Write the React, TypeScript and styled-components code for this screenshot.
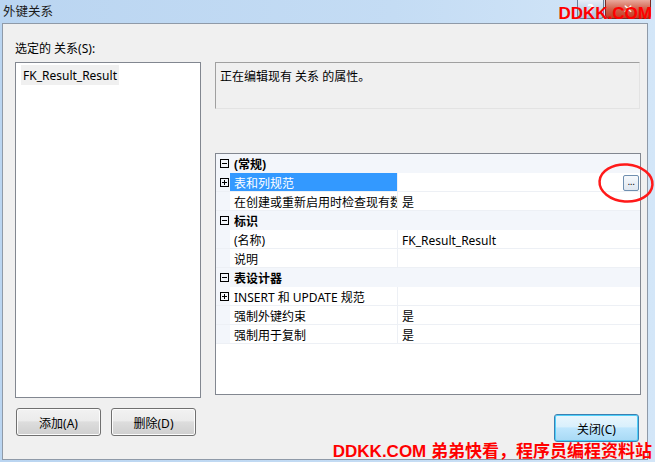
import React from "react";
import styled, { createGlobalStyle } from "styled-components";

const Global = createGlobalStyle`
  html, body { margin: 0; padding: 0; }
  body { width: 655px; height: 462px; overflow: hidden; }
  * { box-sizing: border-box; }
`;

const UI_FONT = `"Noto Sans", "Noto Sans CJK SC", sans-serif`;

const Window = styled.div`
  position: relative;
  width: 655px;
  height: 462px;
  display: flex;
  flex-direction: column;
  background: linear-gradient(to right, #bad5f1 0%, #c4dcf4 60%, #d3e6f8 100%);
  padding: 0 7px 2px 2px;
  font-family: ${UI_FONT};
  font-size: 12px;
  color: #000;
`;

const TitleBar = styled.div`
  height: 23px;
  display: flex;
  align-items: flex-start;
`;

const Title = styled.div`
  padding: 4px 0 0 1px;
  font-size: 12.5px;
  line-height: 16px;
  color: #1b1b1b;
  flex: 1;
`;

const CaptionButton = styled.div<{ $close?: boolean }>`
  width: ${(p) => (p.$close ? 46 : 27)}px;
  height: 19px;
  margin-right: ${(p) => (p.$close ? -3 : 1)}px;
  border: 1px solid ${(p) => (p.$close ? "#7d2a22" : "#6a7f98")};
  border-top: none;
  border-radius: 0 0 4px 4px;
  background: ${(p) =>
    p.$close
      ? "linear-gradient(#e9a99c, #d2604c 50%, #c43b22 100%)"
      : "linear-gradient(#e6eef8, #c6d6ea 50%, #aec3de 100%)"};
  color: #fff;
  font-family: "DejaVu Sans", sans-serif;
  font-weight: bold;
  font-size: 12px;
  display: flex;
  align-items: center;
  justify-content: center;
  line-height: 1;
`;

const Client = styled.div`
  flex: 1;
  background: #f0f0f0;
  border: 1px solid #8f9aa8;
  padding: 15px 6px 0 12px;
  display: flex;
  gap: 14px;
`;

const LeftCol = styled.div`
  width: 186px;
  display: flex;
  flex-direction: column;
`;

const Label = styled.div`
  height: 23px;
  line-height: 16px;
  padding-top: 2px;
`;

const ListBox = styled.div`
  height: 336px;
  background: #fff;
  border: 1px solid #828790;
  padding: 2px 5px;
`;

const ListItem = styled.div`
  display: inline-block;
  background: #f0f0f0;
  padding: 1px 2px 0;
  height: 20px;
  line-height: 20px;
`;

const ButtonRow = styled.div`
  display: flex;
  gap: 10px;
  margin-top: 10px;
  padding-left: 1px;
`;

const Button = styled.button<{ $default?: boolean }>`
  width: 85px;
  height: 28px;
  font-family: ${UI_FONT};
  font-size: 12px;
  color: #000;
  border-radius: 3px;
  padding: 1px 0 0;
  border: 1px solid ${(p) => (p.$default ? "#3c7fb1" : "#707070")};
  box-shadow: ${(p) => (p.$default ? "inset 0 0 0 1px #4fd0fa" : "inset 0 0 0 1px #fcfcfc")};
  background: ${(p) =>
    p.$default
      ? "linear-gradient(#eaf6fd 0%, #d9f0fc 45%, #bee6fd 50%, #a7d9f5 100%)"
      : "linear-gradient(#f2f2f2 0%, #ebebeb 45%, #dddddd 50%, #cfcfcf 100%)"};
`;

const RightCol = styled.div`
  width: 425px;
  display: flex;
  flex-direction: column;
  padding-top: 23px;
`;

const Description = styled.div`
  height: 47px;
  border: 1px solid #a0a0a0;
  border-right-color: #e3e3e3;
  border-bottom-color: #e3e3e3;
  background: #f0f0f0;
  padding: 5px 4px 0;
  line-height: 18px;
`;

const Grid = styled.div`
  position: relative;
  margin-top: 44px;
  width: 426px;
  height: 242px;
  border: 1px solid #828790;
  background: #fff;
  display: flex;
  flex-direction: column;
`;

const Row = styled.div<{ $category?: boolean }>`
  height: 19px;
  flex: none;
  display: flex;
  overflow: hidden;
  background: ${(p) => (p.$category ? "#f3f6fb" : "#fff")};
  border-bottom: 1px solid ${(p) => (p.$category ? "#f3f6fb" : "#edf0f5")};
`;

const Gutter = styled.div`
  width: 14px;
  flex: none;
  background: #f3f6fb;
  display: flex;
  align-items: center;
  justify-content: center;
  padding-left: 2px;
`;

const Expander = styled.div`
  width: 9px;
  height: 9px;
  border: 1px solid #000;
  position: relative;
  &::before {
    content: "";
    position: absolute;
    left: 1px;
    right: 1px;
    top: 3px;
    height: 1px;
    background: #000;
  }
`;

const ExpanderPlus = styled(Expander)`
  &::after {
    content: "";
    position: absolute;
    top: 1px;
    bottom: 1px;
    left: 3px;
    width: 1px;
    background: #000;
  }
`;

const CategoryName = styled.div`
  flex: 1;
  font-weight: bold;
  padding: 2px 0 0 4px;
  line-height: 17px;
`;

const NameCell = styled.div<{ $selected?: boolean }>`
  width: 168px;
  flex: none;
  padding: 2px 0 0 4px;
  line-height: 17px;
  white-space: nowrap;
  overflow: hidden;
  background: ${(p) => (p.$selected ? "#3399ff" : "transparent")};
  color: ${(p) => (p.$selected ? "#fff" : "#000")};
  border-right: 1px solid #edf0f5;
`;

const ValueCell = styled.div`
  flex: 1;
  padding: 2px 0 0 4px;
  line-height: 17px;
  display: flex;
  align-items: flex-start;
  white-space: nowrap;
`;

const DotsButton = styled.div`
  margin-left: auto;
  margin-right: 1px;
  margin-top: 0;
  width: 16px;
  height: 16px;
  border: 1px solid #6f8fb0;
  border-radius: 2px;
  background: linear-gradient(#f6f9fc, #dfe7f0);
  font-size: 10px;
  line-height: 12px;
  text-align: center;
  font-family: "Liberation Sans", sans-serif;
  letter-spacing: -0.5px;
`;

const CloseRow = styled.div`
  display: flex;
  justify-content: flex-end;
  margin-top: 19px;
  padding-right: 1px;
`;

const Watermark = styled.div<{ $top?: boolean }>`
  position: absolute;
  right: 3px;
  ${(p) => (p.$top ? "top: 4px;" : "bottom: 0px;")}
  font-family: "Liberation Sans", "Noto Sans CJK SC", sans-serif;
  font-weight: bold;
  font-size: 17px;
  line-height: 20px;
  color: #ff0000;
  white-space: nowrap;
`;

const Circle = styled.svg`
  position: absolute;
  left: 597px;
  top: 161px;
`;

type Prop =
  | { kind: "cat"; name: string }
  | { kind: "prop"; name: string; value?: string; expandable?: boolean; selected?: boolean; dots?: boolean };

const props: Prop[] = [
  { kind: "cat", name: "(常规)" },
  { kind: "prop", name: "表和列规范", expandable: true, selected: true, dots: true },
  { kind: "prop", name: "在创建或重新启用时检查现有数据", value: "是" },
  { kind: "cat", name: "标识" },
  { kind: "prop", name: "(名称)", value: "FK_Result_Result" },
  { kind: "prop", name: "说明" },
  { kind: "cat", name: "表设计器" },
  { kind: "prop", name: "INSERT 和 UPDATE 规范", expandable: true },
  { kind: "prop", name: "强制外键约束", value: "是" },
  { kind: "prop", name: "强制用于复制", value: "是" },
];

export default function App() {
  return (
    <>
      <Global />
      <Window>
        <TitleBar>
          <Title>外键关系</Title>
          <CaptionButton>?</CaptionButton>
          <CaptionButton $close>✕</CaptionButton>
        </TitleBar>
        <Client>
          <LeftCol>
            <Label>选定的 关系(S):</Label>
            <ListBox>
              <ListItem>FK_Result_Result</ListItem>
            </ListBox>
            <ButtonRow>
              <Button>添加(A)</Button>
              <Button>删除(D)</Button>
            </ButtonRow>
          </LeftCol>
          <RightCol>
            <Description>正在编辑现有 关系 的属性。</Description>
            <Grid>
              {props.map((p, i) =>
                p.kind === "cat" ? (
                  <Row key={i} $category>
                    <Gutter>
                      <Expander />
                    </Gutter>
                    <CategoryName>{p.name}</CategoryName>
                  </Row>
                ) : (
                  <Row key={i}>
                    <Gutter>{p.expandable ? <ExpanderPlus /> : null}</Gutter>
                    <NameCell $selected={p.selected}>{p.name}</NameCell>
                    <ValueCell>
                      {p.value}
                      {p.dots ? <DotsButton>...</DotsButton> : null}
                    </ValueCell>
                  </Row>
                )
              )}
            </Grid>
            <CloseRow>
              <Button $default>关闭(C)</Button>
            </CloseRow>
          </RightCol>
        </Client>
        <Circle width="58" height="44" viewBox="0 0 58 44">
          <ellipse cx="29" cy="22" rx="26.5" ry="18.5" fill="none" stroke="#ff1a1a" strokeWidth="2.5" transform="rotate(4 29 22)" />
        </Circle>
        <Watermark $top>DDKK.COM</Watermark>
        <Watermark>DDKK.COM 弟弟快看，程序员编程资料站</Watermark>
      </Window>
    </>
  );
}
